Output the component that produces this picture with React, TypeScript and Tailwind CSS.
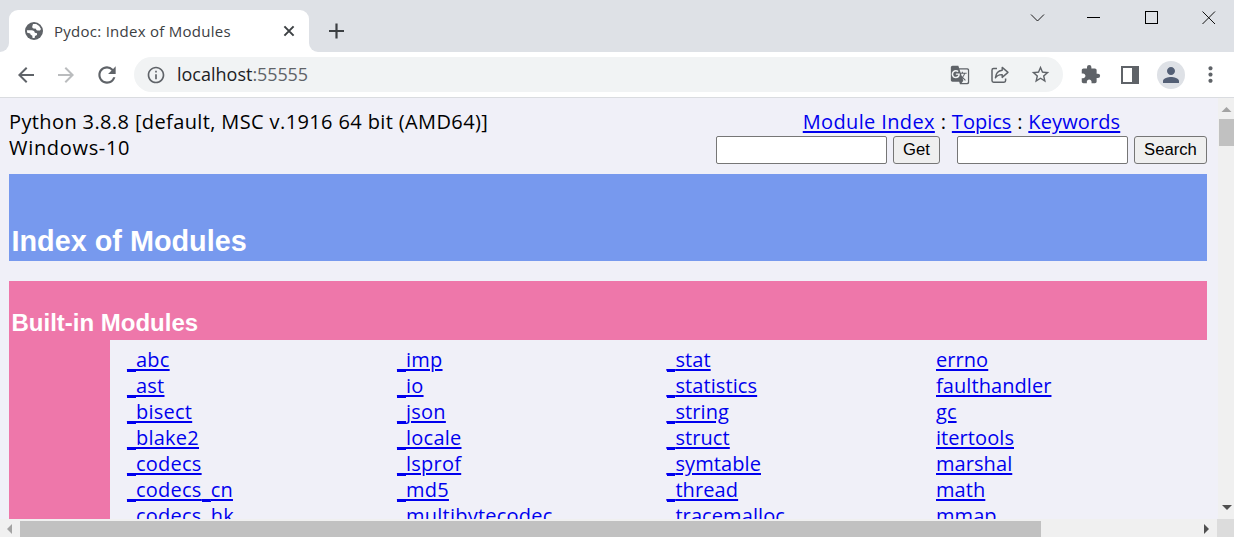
import type { ReactNode } from 'react';
import {
  MdAdd,
  MdArrowBack,
  MdArrowForward,
  MdExtension,
  MdGTranslate,
  MdInfoOutline,
  MdMoreVert,
  MdPerson,
  MdRefresh,
  MdStarBorder,
} from 'react-icons/md';

const columns: { tracking: string; names: string[] }[] = [
  {
    tracking: 'tracking-[0.24px]',
    names: ['_abc', '_ast', '_bisect', '_blake2', '_codecs', '_codecs_cn', '_codecs_hk'],
  },
  {
    tracking: 'tracking-[0.24px]',
    names: ['_imp', '_io', '_json', '_locale', '_lsprof', '_md5', '_multibytecodec'],
  },
  {
    tracking: 'tracking-[0.1px]',
    names: ['_stat', '_statistics', '_string', '_struct', '_symtable', '_thread', '_tracemalloc'],
  },
  {
    tracking: 'tracking-[0.07px]',
    names: ['errno', 'faulthandler', 'gc', 'itertools', 'marshal', 'math', 'mmap'],
  },
];

function Link({ children, className = '' }: { children: ReactNode; className?: string }) {
  return (
    <a
      href="#"
      className={`text-[#0000ee] underline decoration-2 underline-offset-[2px] ${className}`}
    >
      {children}
    </a>
  );
}

// Underscores sit just below the link underline, as a thin second rule.
function ModuleName({ name }: { name: string }) {
  return (
    <>
      {name.split(/(_)/).map((part, i) =>
        part === '_' ? (
          <span
            key={i}
            className="bg-[linear-gradient(#0000ee,#0000ee)] bg-[length:100%_1px] bg-[position:0_25px] bg-no-repeat"
          >
            _
          </span>
        ) : (
          part
        ),
      )}
    </>
  );
}

function GlobeIcon() {
  return (
    <svg viewBox="0 0 18 18" className="size-[18px] shrink-0">
      <circle cx="9" cy="9" r="9" fill="#5f6368" />
      <path
        d="M8 2 L11.2 2 Q14.8 3.3 16 7 L15 8.6 L12.4 8.6 Q11 8.2 11 6.8 L8.6 6.6 Q7.2 6.2 7.2 4.8 Z"
        fill="#fff"
      />
      <path
        d="M1.9 8.3 L6.6 8.3 Q9.6 8.5 9.8 10.8 L12 11.2 L12 13 L10 14 L9.6 16.1 L7.6 16 L7.2 13.6 Q5.4 13.4 5.2 11.6 L2.2 10.8 Z"
        fill="#fff"
      />
    </svg>
  );
}

function CloseIcon() {
  return (
    <svg viewBox="0 0 18 18" className="size-[18px] shrink-0" fill="none" stroke="#3c4043">
      <path d="M4.4 4.4 L13.6 13.6 M13.6 4.4 L4.4 13.6" strokeWidth="2" />
    </svg>
  );
}

function ShareIcon() {
  return (
    <svg
      viewBox="0 0 18 18"
      className="size-[18px]"
      fill="none"
      stroke="#5f6368"
      strokeWidth="1.5"
      strokeLinejoin="round"
    >
      <path d="M6 2.6 H2.6 Q1 2.6 1 4.2 V14.6 Q1 16.2 2.6 16.2 H13 Q14.6 16.2 14.6 14.6 V12.4" />
      <path d="M11.2 1.4 L17 6.4 L11.2 11.4 V8.6 Q6.6 8.4 4.4 11.8 Q5 5 11.2 4.2 Z" strokeWidth="1.4" />
    </svg>
  );
}

function TitleBar() {
  return (
    <div className="flex h-[52px] bg-[#dee1e6]">
      <div className="flex w-[9px] items-end bg-white">
        <div className="h-[52px] w-full rounded-br-[9px] bg-[#dee1e6]" />
      </div>
      <div className="flex w-[300px] flex-col justify-end">
        <div className="flex h-[42.5px] items-center rounded-t-[9px] bg-white pr-[11px] pl-4 text-[#3c4043]">
          <GlobeIcon />
          <span className="ml-[11px] flex-1 text-[15px] tracking-[0.27px] whitespace-nowrap">
            Pydoc: Index of Modules
          </span>
          <CloseIcon />
        </div>
      </div>
      <div className="flex w-[9px] bg-white">
        <div className="h-[52px] w-full rounded-bl-[9px] bg-[#dee1e6]" />
      </div>
      <div className="flex flex-1 pt-[17.5px] pl-[5px]">
        <svg viewBox="0 0 26 26" className="size-[26px]" stroke="#3c4043" strokeWidth="2.2">
          <path d="M13.5 5.5 V20.5 M6 13 H21" />
        </svg>
      </div>
      <svg viewBox="0 0 204 36" className="h-[36px] w-[204px]" fill="none" stroke="#111">
        <path d="M1 14.5 L7.5 21 L14 14.5" strokeWidth="0.95" />
        <path d="M57 17.5 H70" stroke="#000" />
        <rect x="115.5" y="11.5" width="12" height="12" stroke="#000" />
        <path d="M172.5 11.5 L185 24 M185 11.5 L172.5 24" strokeWidth="1" />
      </svg>
    </div>
  );
}

function Toolbar() {
  return (
    <div className="flex h-[46px] items-center border-b border-[#dadce0] bg-white pl-[14px] text-[#5f6368]">
      <MdArrowBack className="size-6" />
      <MdArrowForward className="ml-4 size-6 text-[#babcbe]" />
      <MdRefresh className="ml-4 size-[26px]" />
      <div className="ml-[14px] flex h-[35px] w-[929px] items-center rounded-full bg-[#f1f3f4] pr-3 pl-3">
        <MdInfoOutline className="size-[20px]" />
        <span className="ml-[11px] flex-1 text-[18px] whitespace-nowrap text-[#202124]">
          localhost<span className="tracking-[-0.1px] text-[#5f6368]">:55555</span>
        </span>
        <div className="flex items-center gap-[21px]">
          <MdGTranslate className="size-5" />
          <ShareIcon />
          <MdStarBorder className="size-[21px]" />
        </div>
      </div>
      <MdExtension className="ml-[17px] size-[21px]" />
      <div className="ml-[20px] flex h-[18px] w-[18px] items-center border-y-[2px] border-r-[7px] border-l-[2.5px] border-[#5f6368] bg-white" />
      <div className="ml-[18px] flex size-7 items-center justify-center rounded-full bg-[#dee1e6]">
        <MdPerson className="size-6 text-[#535f75]" />
      </div>
      <MdMoreVert className="ml-[13px] size-[25px]" />
    </div>
  );
}

function SearchForm({ label, className }: { label: string; className: string }) {
  return (
    <form className="flex gap-[6px]">
      <input className="h-7 w-[171px] rounded-[2px] border border-[#767676] bg-white" />
      <button
        type="button"
        className={`h-7 rounded-[3px] border border-[#767676] bg-[#efefef] pt-px font-['Liberation_Sans',sans-serif] text-[16.67px] leading-none text-black ${className}`}
      >
        {label}
      </button>
    </form>
  );
}

function PageHeader() {
  return (
    <header className="flex h-[65px] justify-between leading-[26px] whitespace-nowrap">
      <div>
        <div className="tracking-[0.38px]">Python 3.8.8 [default, MSC v.1916 64 bit (AMD64)]</div>
        <div className="tracking-[0.68px]">Windows-10</div>
      </div>
      <div>
        <div className="flex h-[27px] justify-center">
          <Link className="tracking-[0.36px]">Module Index</Link>
          <span className="w-[17px] text-center">:</span>
          <Link>Topics</Link>
          <span className="w-[17px] text-center">:</span>
          <Link className="tracking-[0.12px]">Keywords</Link>
        </div>
        <div className="flex gap-[17px]">
          <SearchForm label="Get" className="w-[47px]" />
          <SearchForm label="Search" className="w-[73px]" />
        </div>
      </div>
    </header>
  );
}

function VerticalScrollbar() {
  return (
    <div className="flex w-4 flex-col items-center bg-[#f0f0f0]">
      <svg viewBox="0 0 16 21" className="h-[21px] w-4 shrink-0">
        <path d="M3.5 14 L8.5 9 L13.5 14 Z" fill="#a3a3a3" />
      </svg>
      <div className="ml-px h-[27px] w-[15px] bg-[#c1c1c1]" />
      <div className="flex-1" />
      <svg viewBox="0 0 16 16" className="h-4 w-4 shrink-0">
        <path d="M4 2 H14 L9 7 Z" fill="#505050" />
      </svg>
    </div>
  );
}

function HorizontalScrollbar() {
  return (
    <div className="flex h-[18px] bg-[#f0f0f0]">
      <svg viewBox="0 0 20 18" className="h-[18px] w-5">
        <path d="M12 5 V15 L7 10 Z" fill="#a3a3a3" />
      </svg>
      <div className="mt-[2px] h-4 w-[1021px] bg-[#c1c1c1]" />
      <div className="flex-1" />
      <svg viewBox="0 0 16 18" className="h-[18px] w-4">
        <path d="M3 5 V15 L8 10 Z" fill="#505050" />
      </svg>
      <div className="w-[17px] bg-[#dcdcdc]" />
    </div>
  );
}

export default function App() {
  return (
    <div className="flex h-[537px] w-[1234px] flex-col overflow-hidden font-['Open_Sans','Noto_Sans',sans-serif]">
      <TitleBar />
      <Toolbar />
      <div className="flex h-[421px]">
        <main className="flex-1 overflow-hidden bg-[#f0f0f8] pt-[11px] pr-[11px] pl-[9px] text-[20px] text-black">
          <PageHeader />
          <section className="flex h-[87px] items-end bg-[#7799ee] pb-[4px] pl-[2.5px]">
            <h1 className="font-['Liberation_Sans',sans-serif] text-[28.8px] leading-[32px] font-bold text-white">
              Index of Modules
            </h1>
          </section>
          <section className="mt-5 bg-[#ee77aa]">
            <div className="flex h-[59px] items-end pb-[4px] pl-[2.5px]">
              <h2 className="font-['Liberation_Sans',sans-serif] text-[24px] leading-[27px] font-bold text-white">
                Built-in Modules
              </h2>
            </div>
            <div className="ml-[101px] grid grid-cols-[270px_269.5px_269.5px_270px] bg-[#f0f0f8] pt-[7px] pl-[17px]">
              {columns.map(({ tracking, names }) => (
                <div key={names[0]} className={`flex flex-col leading-[26px] ${tracking}`}>
                  {names.map((name) => (
                    <div key={name} className="h-[26px]">
                      <Link>
                        <ModuleName name={name} />
                      </Link>
                    </div>
                  ))}
                </div>
              ))}
            </div>
          </section>
        </main>
        <VerticalScrollbar />
      </div>
      <HorizontalScrollbar />
    </div>
  );
}
